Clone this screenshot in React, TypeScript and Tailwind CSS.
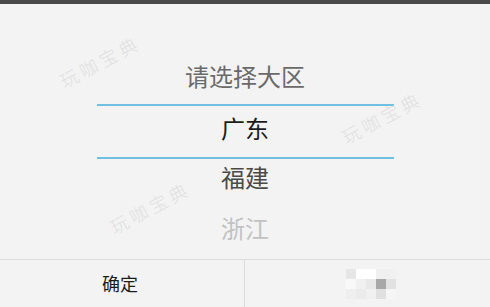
import React from "react";

const mosaic = [
  ["#e6e6e6", "#ffffff", "#ffffff", "#f0f0f0", "#f0f0f0"],
  ["#f8f8f8", "#f0f0f0", "#e8e8e8", "#a8a8a8", "#e2e2e2"],
  ["#efefef", "#ebebeb", "#f0f0f0", "#e0e0e0", "#f6f6f6"],
];

function Watermark({ className }: { className: string }) {
  return (
    <div
      className={
        "absolute text-[18px] font-extralight tracking-[4px] text-[#e0e0e0] -rotate-[28deg] whitespace-nowrap pointer-events-none " +
        className
      }
    >
      玩咖宝典
    </div>
  );
}

export default function App() {
  return (
    <div
      className="relative w-[490px] h-[307px] bg-[#f3f3f3] flex flex-col overflow-hidden"
      style={{ fontFamily: '"Noto Sans CJK SC", "Noto Sans", sans-serif' }}
    >
      <div className="h-[4px] bg-[#4a4a4a]" />
      <div className="h-[255px] flex flex-col items-center">
        <div className="mt-[50px] h-[50px] pb-[7px] flex items-center text-[24px] leading-none text-[#6a6a6a]">
          请选择大区
        </div>
        <div className="w-[297px] h-[2px] bg-[#6fc0e3]" />
        <div className="h-[51px] pb-[7px] flex items-center text-[24px] leading-none text-[#1c1c1c]">
          广东
        </div>
        <div className="w-[297px] h-[2px] bg-[#6fc0e3]" />
        <div className="h-[42px] pb-[6px] flex items-center text-[24px] leading-none text-[#4a4a4a]">
          福建
        </div>
        <div className="h-[58px] pb-[4px] flex items-center text-[24px] leading-none text-[#c2c2c2]">
          浙江
        </div>
      </div>
      <div className="h-[1px] bg-[#dcdcdc]" />
      <div className="flex-1 flex">
        <div className="w-[245px] pr-[4px] border-r border-[#dcdcdc] flex items-center justify-center text-[18px] text-[#1c1c1c]">
          确定
        </div>
        <div className="flex-1 flex items-center justify-center">
          <div className="flex flex-col ml-[6px]">
            {mosaic.map((row, i) => (
              <div key={i} className="flex">
                {row.map((c, j) => (
                  <div key={j} className="w-[10px] h-[10px]" style={{ background: c }} />
                ))}
              </div>
            ))}
          </div>
        </div>
      </div>
      <Watermark className="left-[56px] top-[48px]" />
      <Watermark className="left-[338px] top-[104px]" />
      <Watermark className="left-[106px] top-[194px]" />
    </div>
  );
}
